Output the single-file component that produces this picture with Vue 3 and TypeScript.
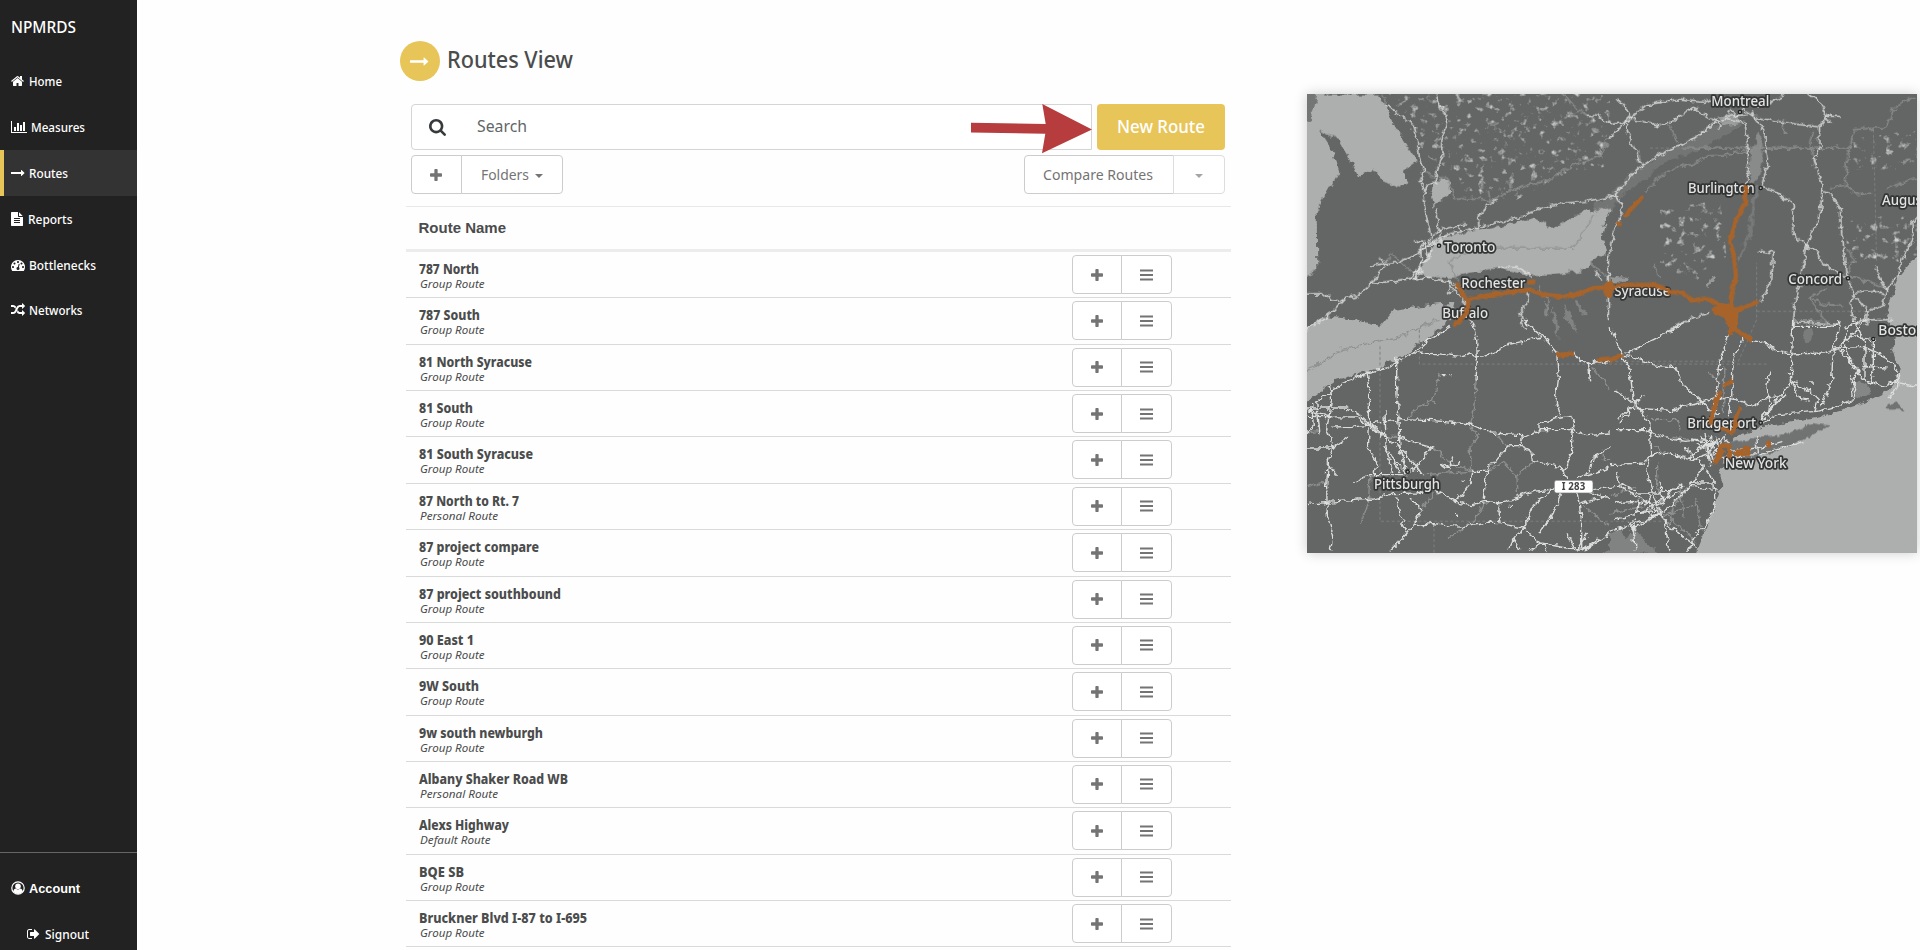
<script setup lang="ts">
interface Icon { box: string; d: string; w: number; h: number }
interface Tile { x: number; y: number; roads: string[]; minor: string[]; routes: string[] }

const icons: Record<string, Icon> = {
  home: { box: '64 0 1664 1792', w: 13, h: 14, d: 'M1472 992v480q0 26-19 45t-45 19h-384v-384h-256v384h-384q-26 0-45-19t-19-45v-480q0-1 .5-3t.5-3l575-474 575 474q1 2 1 6zm223-69l-62 74q-8 9-21 11h-3q-13 0-21-7l-692-577-692 577q-12 8-24 7-13-2-21-11l-62-74q-8-10-7-23.500t11-21.500l719-599q32-26 76-26t76 26l244 204v-195q0-14 9-23t23-9h192q14 0 23 9t9 23v408l219 182q10 8 11 21.500t-7 23.500z' },
  bars: { box: '0 0 2048 1792', w: 16, h: 14, d: 'M640 896v512h-256v-512h256zm384-512v1024h-256v-1024h256zm1024 1152v128h-2048v-1536h128v1408h1920zm-640-896v768h-256v-768h256zm384-384v1152h-256v-1152h256z' },
  arrow: { box: '0 0 1792 1792', w: 14, h: 14, d: 'M1728 893q0 14-10 24l-384 354q-16 14-35 6-19-9-19-29v-224h-1248q-14 0-23-9t-9-23v-192q0-14 9-23t23-9h1248v-224q0-21 19-29t35 5l384 350q10 10 10 23z' },
  file: { box: '128 0 1536 1792', w: 12, h: 14, d: 'M1596 476q14 14 28 36h-472v-472q22 14 36 28zm-476 164h544v1056q0 40-28 68t-68 28h-1344q-40 0-68-28t-28-68v-1600q0-40 28-68t68-28h800v544q0 40 28 68t68 28zm160 736v-64q0-14-9-23t-23-9h-704q-14 0-23 9t-9 23v64q0 14 9 23t23 9h704q14 0 23-9t9-23zm0-256v-64q0-14-9-23t-23-9h-704q-14 0-23 9t-9 23v64q0 14 9 23t23 9h704q14 0 23-9t9-23zm0-256v-64q0-14-9-23t-23-9h-704q-14 0-23 9t-9 23v64q0 14 9 23t23 9h704q14 0 23-9t9-23z' },
  gauge: { box: '0 0 1792 1792', w: 14, h: 14, d: 'M384 1152q0-53-37.500-90.500t-90.500-37.500-90.500 37.500-37.500 90.500 37.500 90.500 90.500 37.500 90.500-37.500 37.500-90.500zm192-448q0-53-37.500-90.500t-90.500-37.500-90.500 37.500-37.500 90.500 37.500 90.500 90.500 37.500 90.500-37.500 37.500-90.500zm428 481l101-382q6-26-7.500-48.500t-38.500-29.500-48 6.500-30 39.500l-101 382q-60 5-107 43.500t-63 98.500q-20 77 20 146t117 89 146-20 89-117q16-60-6-117t-72-91zm660-33q0-53-37.500-90.500t-90.500-37.500-90.500 37.500-37.500 90.500 37.500 90.500 90.500 37.500 90.500-37.500 37.500-90.500zm-640-640q0-53-37.500-90.500t-90.500-37.500-90.500 37.500-37.500 90.500 37.500 90.500 90.500 37.500 90.500-37.500 37.500-90.500zm448 192q0-53-37.500-90.500t-90.500-37.500-90.500 37.500-37.500 90.500 37.500 90.500 90.500 37.500 90.500-37.500 37.500-90.500zm320 448q0 261-141 483-19 29-54 29h-1402q-35 0-54-29-141-221-141-483 0-182 71-348t191-286 286-191 348-71 348 71 286 191 191 286 71 348z' },
  random: { box: '0 0 1792 1792', w: 14, h: 14, d: 'M666 481q-60 92-137 273-22-45-37-72.500t-40.500-63.500-51-56.500-63-35-81.500-14.500h-224q-14 0-23-9t-9-23v-192q0-14 9-23t23-9h224q250 0 410 225zm1126 799q0 14-9 23l-320 320q-9 9-23 9-13 0-22.500-9.500t-9.500-22.500v-192q-32 0-85 .5t-81 1-73-1-71-5-64-10.500-63-18.500-58-28.500-59-40-55-53.500-56-69.500q59-93 136-273 22 45 37 72.500t40.500 63.500 51 56.500 63 35 81.500 14.500h256v-192q0-14 9-23t23-9q12 0 24 10l319 319q9 9 9 23zm0-896q0 14-9 23l-320 320q-9 9-23 9-13 0-22.500-9.500t-9.500-22.500v-192h-256q-48 0-87 15t-69 45-51 61.500-45 77.500q-32 62-78 171-29 66-49.500 111t-54 105-64 100-74 83-90 68.500-106.500 42-128 16.500h-224q-14 0-23-9t-9-23v-192q0-14 9-23t23-9h224q48 0 87-15t69-45 51-61.500 45-77.500q32-62 78-171 29-66 49.500-111t54-105 64-100 74-83 90-68.500 106.500-42 128-16.500h256v-192q0-14 9-23t23-9q12 0 24 10l319 319q9 9 9 23z' },
  signout: { box: '64 0 1664 1792', w: 13, h: 14, d: 'M704 1440q0 4 1 20t.5 26.500-3 23.500-10 19.500-20.500 6.500h-320q-119 0-203.500-84.500t-84.500-203.500v-704q0-119 84.500-203.500t203.500-84.500h320q13 0 22.500 9.500t9.500 22.500q0 4 1 20t.5 26.500-3 23.500-10 19.500-20.500 6.500h-320q-66 0-113 47t-47 113v704q0 66 47 113t113 47h312l11.500 1 11.500 3 8 5.500 7 9 2 13.500zm928-544q0 26-19 45l-544 544q-19 19-45 19t-45-19-19-45v-288h-448q-26 0-45-19t-19-45v-384q0-26 19-45t45-19h448v-288q0-26 19-45t45-19 45 19l544 544q19 19 19 45z' },
}

const nav = [
  { label: 'Home', icon: icons.home, width: 33, gap: 4.5 },
  { label: 'Measures', icon: icons.bars, width: 54, gap: 3.5 },
  { label: 'Routes', icon: icons.arrow, width: 39, gap: 4 },
  { label: 'Reports', icon: icons.file, width: 44.5, gap: 4.5 },
  { label: 'Bottlenecks', icon: icons.gauge, width: 67, gap: 4 },
  { label: 'Networks', icon: icons.random, width: 53.5, gap: 4 },
]
const current = 'Routes'

const plus = 'M1600 736v192q0 40-28 68t-68 28h-416v416q0 40-28 68t-68 28h-192q-40 0-68-28t-28-68v-416h-416q-40 0-68-28t-28-68v-192q0-40 28-68t68-28h416v-416q0-40 28-68t68-28h192q40 0 68 28t28 68v416h416q40 0 68 28t28 68z'
const magnifier = 'M1216 832q0-185-131.500-316.500t-316.500-131.500-316.500 131.500-131.500 316.500 131.500 316.500 316.500 131.500 316.500-131.500 131.500-316.500zm512 832q0 52-38 90t-90 38q-54 0-90-38l-343-342q-179 124-399 124-143 0-273.500-55.500t-225-150-150-225-55.500-273.500 55.500-273.500 150-225 225-150 273.500-55.500 273.500 55.500 225 150 150 225 55.500 273.500q0 220-124 399l343 343q37 37 37 90z'

const routes = [
  { name: '787 North', owner: 'Group', width: 60 },
  { name: '787 South', owner: 'Group', width: 61 },
  { name: '81 North Syracuse', owner: 'Group', width: 113 },
  { name: '81 South', owner: 'Group', width: 54 },
  { name: '81 South Syracuse', owner: 'Group', width: 114 },
  { name: '87 North to Rt. 7', owner: 'Personal', width: 100 },
  { name: '87 project compare', owner: 'Group', width: 120 },
  { name: '87 project southbound', owner: 'Group', width: 142 },
  { name: '90 East 1', owner: 'Group', width: 55 },
  { name: '9W South', owner: 'Group', width: 60 },
  { name: '9w south newburgh', owner: 'Group', width: 124 },
  { name: 'Albany Shaker Road WB', owner: 'Personal', width: 149 },
  { name: 'Alexs Highway', owner: 'Default', width: 90 },
  { name: 'BQE SB', owner: 'Group', width: 45 },
  { name: 'Bruckner Blvd I-87 to I-695', owner: 'Group', width: 168 },
]
const ownerWidth: Record<string, number> = { Group: 64.5, Personal: 78, Default: 70.5 }

const tiles: Tile[] = [
  {
    x: 0, y: 0,
    roads: [
      'M262 48L300 78 342 108 352 150 358 205 374 240 360 275 374 300 368 320 380 385 392 440', 'M408 14L415 45 440 80 438 112 428 130 428 195 410 250 406 275 374 300', 'M405 354L415 410 424 460', 'M538 415L534 380 565 345 590 332', 'M930 320L860 335 790 340 730 352 670 380 600 397 540 413 480 425 430 440 385 465 350 495 300 517 255 522 240 505', 'M255 522L215 527M255 528L212 584 180 615 135 626 120 635 90 628 70 612 20 613', 'M212 584L262 576 330 567 385 565 450 576 470 590 490 610', 'M385 460L410 425 445 415 495 402M345 450L375 462 380 500 350 550 330 565M375 455L362 470 365 540 345 570M400 480L380 510 352 540 350 570M430 460L392 460 352 485', 'M480 430L475 405', 'M135 626L100 665 60 695 20 718', 'M445 570L455 600 440 610M455 590L480 620 500 640 515 690 525 720', 'M590 532L650 533 690 552 690 565M685 600L684 640 660 670 665 700 680 720', 'M925 495L925 690M885 545L905 570M860 76L900 80 930 105',
    ],
    minor: ['M245 14L262 48M374 240L400 262 445 265 465 330 520 322 570 335 640 300 750 270 810 232 910 195 915 150 930 143', 'M255 522L275 492 345 557', 'M445 515L495 492 522 475H822L880 375M445 515L475 580', 'M905 155L920 160 912 175M570 338L565 300', 'M710 590L750 635 740 680', 'M790 14L835 60 860 76M920 560L870 520M345 720L420 690'],
    routes: ['M470 577L485 610 505 638 500 670 462 706', 'M505 628L560 618 610 610 690 600 730 615 790 621 840 612 880 595 930 592', 'M682 578H708', 'M920 580V620'],
  },
  {
    x: 930, y: 0,
    roads: [
      'M25 30L60 75 45 100 60 150 75 180 95 232', 'M0 145L45 100 110 45 200 30 280 38 310 30', 'M60 75L80 92 150 108 180 100 245 52 320 95 345 85 405 98', 'M525 15L480 38 430 50', 'M595 14L635 45 650 80 628 112 630 170 612 210 638 290 630 370 590 470 575 560 555 640 548 720', 'M650 80H690M645 88L665 98', 'M430 82L520 98 628 112', 'M405 98L415 190 415 240 408 290', 'M435 85L465 125 465 160 475 210 455 293 500 305 550 345 548 430 590 470 610 475 640 520 680 555 712 560', 'M15 315L80 240 140 200 240 155 320 95', 'M0 325L15 315 35 345 35 375 10 430 0 500', 'M640 305L655 310 690 350 695 430 708 520 712 560 730 610 770 660 770 710', 'M440 482L490 490 485 570 460 620 450 635', 'M920 385L905 400 910 450 880 500 860 560 830 600 815 650M795 530L800 550 830 600M730 610L800 605 820 615M735 610L720 640 730 690', 'M180 720L230 690 300 670', 'M555 697L640 700 690 710', 'M0 105L50 98M320 95L330 105 325 120M360 65L385 80M400 60L430 80 425 60M345 80L410 75', 'M815 650L770 665M740 700L770 690 850 690',
    ],
    minor: ['M105 310L150 260 210 230 250 225 290 200 345 195 415 180', 'M215 175H720L730 120 790 115 830 110 850 60 890 30 920 22', 'M720 175L708 220 710 290 660 295M710 290L740 315 790 310M830 300L870 280 920 265', 'M178 108L205 160M610 125L600 175 615 205M715 480L730 510 712 560 760 570 820 590', 'M598 625L650 595M598 625L650 645 700 650M598 625L650 700', 'M95 235L85 180M135 525L148 570M520 85L520 130 530 130'],
    routes: ['M100 320L70 350 45 380M18 402H35', 'M407 285L405 345 380 385 360 455 372 500 378 560 365 610 365 660 375 720', 'M0 592L60 585 140 586 180 607 215 608 245 633 290 626 350 655 360 690', 'M305 660H370L400 655 445 635M135 578L140 595M345 650L380 665 375 700'],
  },
  {
    x: 0, y: 690,
    roads: [
      'M515 0L530 60 532 120 528 180', 'M455 20L390 60 340 100 260 145 200 160 130 188 50 245', 'M340 100L410 102 480 110 510 100 530 115 570 105 625 75 690 60 725 52', 'M670 0L690 18 730 50 770 100 775 180 768 240 782 290', 'M925 125L890 130 840 125 820 100M865 130L872 185', 'M290 110L290 210 297 300 300 390 320 460', 'M200 155L208 190 208 310 205 390 230 425 222 465', 'M100 322L150 320 220 312 300 300 400 303 512 313 570 340 670 345M720 312L760 298 815 290', 'M20 265H140L180 290 210 315 290 375 350 440 370 470', 'M20 290L170 292 250 350M50 245L60 345M85 200L95 240 80 330 100 380 85 425 80 500 82 590 98 650 90 695M20 385L100 385 145 355M35 250L40 320 20 340M20 270L95 290M80 425L110 465', 'M20 555L80 548 220 538 280 522 350 520 400 510 470 548 520 555 555 545 600 550 700 515 760 508', 'M255 270L258 380 275 460M300 355L395 382 350 440 320 465 210 465 160 490M270 400L300 460M250 380L310 450', 'M670 345L665 380 620 382 560 455 550 540M665 380L695 395 700 425 780 440 800 475M670 355L720 330 815 330 860 345 930 340M720 312L720 330M805 290L825 300 815 350 815 400 790 470', 'M455 410L450 450 425 430M450 440L480 425', 'M515 455L510 490 470 545M515 455H560M830 475L930 445M870 458L880 410 930 385', 'M850 510L930 540M850 515L930 500M770 500L700 560 670 625M785 515L760 580 720 640M830 510L845 600 845 690M835 555L920 530', 'M340 618L400 612 440 618 500 620 560 610 600 612 670 625 720 670 800 685 860 690M290 530L300 590 325 640 270 695M330 535L365 570 340 620 325 640M595 550L600 610M670 625L640 660 625 695M725 670L740 697M725 670L690 695M640 660L660 690', 'M800 640L830 695M860 640L830 690M890 660L850 695M930 640L850 695', 'M425 165H440M448 168H458M485 483L495 488M470 580V592M628 560H640',
    ],
    minor: ['M20 155L125 90 320 45 400 0', 'M325 300L350 260 400 245 420 160M528 180L525 260 512 312', 'M512 320L535 350 510 380 515 455', 'M560 455L610 430 650 470 655 520M590 345L620 382M700 425L655 465M20 500L80 485M210 470L205 550 185 610M400 520L370 565M550 550L520 610M875 140L930 210M395 382L450 430 515 455M370 465L440 460 515 455', 'M440 660L510 610M850 560L930 620M255 350H300M910 385V420H930M20 340L60 335'],
    routes: ['M485 0L460 18', 'M768 100L790 108 822 100', 'M890 123Q912 115 930 118'],
  },
  {
    x: 930, y: 690,
    roads: [
      'M0 20L30 90 60 150 70 240 85 260 120 310 125 400 110 450 130 530 160 590 180 697', 'M38 105L130 135 200 145 215 190 265 235 300 270 330 280', 'M50 100L150 50 240 0', 'M355 45L325 140 318 230 315 290M400 55L370 110 365 230 355 290', 'M425 62L470 70 500 95 545 103 640 100 680 85 760 80 830 115 870 160 865 190 920 200', 'M548 0L545 103 545 185 500 240 450 310', 'M545 185L600 215 625 240 615 275M545 185L570 240 600 245M545 185L535 155M455 295L530 220', 'M20 300L60 265 180 272 270 250 315 230 380 240 430 260 460 235 530 230M460 310L500 285 620 275 680 260 730 240 740 210 720 170M480 155L470 200 480 240 475 290', 'M20 330L110 330 150 350 220 365 300 360M120 405L170 400 250 420 310 400M0 435L100 430 140 400', 'M250 360L300 380 310 430M260 380L320 370M270 350L330 400M285 340L300 440M230 420L270 385 330 360M220 380L280 440M300 350L310 370 295 400M340 355L310 405M320 345L322 410M340 350L355 370', 'M280 440L240 500 180 560 110 600 50 620 0 635M280 440L315 490 318 560 290 610 260 640 230 695M240 500L320 510M240 490L315 490', 'M0 500L40 495 80 520 150 520 220 500M10 600L60 590 130 560 160 545 200 500M15 550L70 545 120 555 210 520M130 560L180 620 260 680M70 620L75 695M80 600L60 610 75 650M20 460L30 500 130 560M85 540L80 580 150 570M150 485L155 540M115 520L130 600M70 630L160 575M180 520L215 490 215 510', 'M310 408L340 410 440 405 500 390 580 365M360 395L440 385 520 365M440 350L445 400', 'M690 0L685 40 670 85 665 180 635 260M550 20H680M710 20L705 70 720 120 760 180 820 200 870 180M790 60L790 150 780 190M730 0L765 70 765 180M690 90L740 150 725 230M750 0L710 30M770 0L750 20 690 80M760 140L830 145M720 50L790 60M725 145L750 150 720 190', 'M860 160L860 200 840 235',
      'M15 210L70 250M70 220L80 260M100 230L75 255 30 310M600 190H615M325 150H340',
    ],
    minor: ['M345 140L340 280M330 190L300 160M125 300L205 300 210 330M130 380L170 400M150 520L140 500 140 430M240 500L190 560 180 620M210 500L220 600M260 550L160 590M260 540L270 620M240 360L170 350M0 530L80 500M155 570L260 670M0 580L100 560'],
    routes: ['M0 122L38 105', 'M372 0L360 45M370 25L425 62', 'M340 200L370 183M332 213L320 240 300 315M393 262L378 290 373 340M333 325L370 340', 'M315 430L335 378H358L357 415M370 402L415 385 415 403 380 405M472 365L478 382M318 425L340 390'],
  },
]

const labels = [
  { text: 'Toronto', x: 433, y: 487, w: 153 },
  { text: 'Rochester', x: 484, y: 595, w: 192 },
  { text: 'Buffalo', x: 427, y: 685, w: 137 },
  { text: 'Montreal', x: 1234, y: 50, w: 174 },
  { text: 'Burlington', x: 1164, y: 310, w: 200 },
  { text: 'Augusta', x: 1746, y: 347, w: 158 },
  { text: 'Concord', x: 1465, y: 584, w: 161 },
  { text: 'Syracuse', x: 943, y: 619, w: 168 },
  { text: 'Boston', x: 1735, y: 735, w: 140 },
  { text: 'Bridgeport', x: 1162, y: 1015, w: 206 },
  { text: 'New York', x: 1274, y: 1135, w: 186 },
  { text: 'Pittsburgh', x: 222, y: 1199, w: 198 },
]
const towns = [[417, 468], [1320, 67], [1382, 295], [1644, 566], [1720, 748], [1382, 999], [323, 1146]]
</script>

<template>
  <div class="page">
    <aside class="sidebar">
      <div class="brand"><svg class="fit" width="66" height="22"><text x="0" y="17" textLength="65" lengthAdjust="spacingAndGlyphs">NPMRDS</text></svg></div>
      <nav>
        <a v-for="item in nav" :key="item.label" class="nav-item" :class="{ active: item.label === current }">
          <svg :viewBox="item.icon.box" :width="item.icon.w" :height="item.icon.h" class="glyph"><path :d="item.icon.d" /></svg>
          <svg class="fit" :style="{ marginLeft: item.gap + 'px' }" :width="item.width + 2" height="20"><text x="0" y="15" :textLength="item.width" lengthAdjust="spacingAndGlyphs">{{ item.label }}</text></svg>
        </a>
      </nav>
      <div class="account">
        <a class="nav-item strong">
          <svg class="glyph" viewBox="0 0 14 14" width="14" height="14"><circle cx="7" cy="7" r="6.200" fill="none" stroke="#fff" stroke-width="1.200" /><circle cx="7" cy="5.300" r="2.800" /><path d="M2.200 10.800Q2.800 7.600 4.900 7.600Q7 9.400 9.100 7.600Q11.200 7.600 11.800 10.800Q7 15.200 2.200 10.800Z" /></svg>
          <svg class="fit" width="53" height="20"><text x="0" y="15" textLength="51" lengthAdjust="spacingAndGlyphs">Account</text></svg>
        </a>
        <a class="nav-item sub">
          <svg class="glyph" :viewBox="icons.signout.box" width="13" height="14"><path :d="icons.signout.d" /></svg>
          <svg class="fit" width="46" height="20"><text x="0" y="14.500" textLength="44" lengthAdjust="spacingAndGlyphs">Signout</text></svg>
        </a>
      </div>
    </aside>

    <main class="content">
      <header class="title">
        <span class="disc"><svg viewBox="0 0 1792 1792" width="19" height="19"><path :d="icons.arrow.d" /></svg></span>
        <svg class="fit heading" width="132" height="34"><text x="0" y="26" textLength="126" lengthAdjust="spacingAndGlyphs">Routes View</text></svg>
      </header>

      <div class="search-row">
        <div class="search">
          <svg class="lens" viewBox="64 128 1664 1664" width="17" height="17"><path :d="magnifier" /></svg>
          <svg class="fit" width="56" height="26"><text x="0" y="18" textLength="50" lengthAdjust="spacingAndGlyphs">Search</text></svg>
        </div>
        <button class="new-route"><svg class="fit" width="90" height="28"><text x="1" y="20" textLength="88" lengthAdjust="spacingAndGlyphs">New Route</text></svg></button>
        <svg class="pointer" width="122" height="50" viewBox="0 0 122 50"><path d="M0 18.700L74.700 20 71.300 0 121 25.500 71 49.300 74.300 29.800 0 28.500Z" /></svg>
      </div>

      <div class="tools">
        <div class="group">
          <button class="add"><svg viewBox="192 128 1408 1408" width="12" height="12"><path :d="plus" /></svg></button>
          <button class="folders"><svg class="fit" width="49" height="24"><text x="0" y="16.500" textLength="48" lengthAdjust="spacingAndGlyphs">Folders</text></svg><i class="caret" /></button>
        </div>
        <div class="group">
          <button class="compare"><svg class="fit" width="111" height="24"><text x="0" y="16.500" textLength="110" lengthAdjust="spacingAndGlyphs">Compare Routes</text></svg></button>
          <button class="more"><i class="caret" /></button>
        </div>
      </div>

      <section class="table">
        <div class="thead">Route Name</div>
        <div v-for="route in routes" :key="route.name" class="row">
          <div class="names">
            <svg class="fit name" :width="route.width + 2" height="18"><text x="0" y="14" :textLength="route.width" lengthAdjust="spacingAndGlyphs">{{ route.name }}</text></svg>
            <svg class="fit owner" :width="ownerWidth[route.owner] + 3" height="15"><text x="1" y="11" :textLength="ownerWidth[route.owner]" lengthAdjust="spacingAndGlyphs">{{ route.owner }} Route</text></svg>
          </div>
          <div class="group actions">
            <button><svg viewBox="192 128 1408 1408" width="12" height="12"><path :d="plus" /></svg></button>
            <button><svg viewBox="0 0 13 12" width="13" height="12"><path d="M0 .5h13v2H0zM0 5h13v2H0zM0 9.500h13v2H0z" /></svg></button>
          </div>
        </div>
      </section>
    </main>

    <div class="map">
      <svg width="610" height="459" viewBox="21 13 1830 1377">
        <defs>
          <filter id="wobble" x="-5%" y="-5%" width="110%" height="110%"><feTurbulence type="fractalNoise" baseFrequency="0.05" numOctaves="3" seed="4" /><feDisplacementMap in="SourceGraphic" scale="22" xChannelSelector="R" yChannelSelector="G" /></filter>
          <filter id="rough" x="-5%" y="-5%" width="110%" height="110%"><feTurbulence type="fractalNoise" baseFrequency="0.06" numOctaves="2" seed="7" /><feDisplacementMap in="SourceGraphic" scale="12" xChannelSelector="R" yChannelSelector="G" /></filter>
          <filter id="shore" x="-5%" y="-5%" width="110%" height="110%"><feTurbulence type="fractalNoise" baseFrequency="0.04" numOctaves="3" seed="8" /><feDisplacementMap in="SourceGraphic" scale="26" xChannelSelector="R" yChannelSelector="G" /><feGaussianBlur stdDeviation="2" /></filter>
          <filter id="speckle" x="0" y="0" width="100%" height="100%"><feTurbulence type="fractalNoise" baseFrequency="0.045" numOctaves="3" seed="11" /><feColorMatrix values="0 0 0 0 0.62  0 0 0 0 0.63  0 0 0 0 0.63  3.500 0 0 0 -2.050" /><feComposite in2="SourceGraphic" operator="in" /><feGaussianBlur stdDeviation="1.500" /></filter>
        </defs>
        <rect x="0" y="0" width="1870" height="1400" fill="#636665" />
        <g class="speckles">
          <path d="M260 0H930V230L800 250 650 330 500 320 470 250 380 200 330 120ZM1080 360L1260 330 1280 500 1180 580 1080 520ZM1640 150L1850 120V240L1640 240ZM1640 380H1850V520H1640Z" />
        </g>
        <g class="water">
          <path d="M0 0H35L75 14H235L275 90 320 165 350 215 315 240 320 280 295 295 250 275 215 235 175 265 145 200 115 150 60 122 100 185 118 245 80 310 50 365 52 540 0 565Z" />
          <path d="M55 0L40 65 20 100H0V0Z" fill="#737675" />
          <path d="M400 280Q430 255 450 280L450 310 400 350 392 315Z" />
          <path d="M385 490L420 445 500 425 620 405 700 385 760 415 850 360 880 365 930 350 905 440 915 490 840 545 750 557 690 560 600 535 530 545 450 565 390 562 355 550Z" />
          <path d="M880 345L930 310 1010 235 1100 185 1245 105 1320 85 1335 100 1200 180 1100 215 980 310 930 365 890 375Z" opacity=".22" />
          <path d="M0 728L80 680 170 690 240 710 280 660 400 645 460 640 450 690 390 740 320 790 240 835 110 870 20 935 0 940Z" />
          <path d="M1870 490L1830 520 1790 570 1775 620 1760 680 1785 735 1775 790 1800 850 1770 900 1690 940 1560 980 1390 1010 1300 1045 1262 1150 1260 1200 1230 1290 1180 1410H1870V490Z" />
          <path d="M930 1330L960 1320 1010 1395H930ZM900 1395L1010 1325 1080 1395Z" opacity=".4" />
          <path d="M1370 130Q1350 200 1345 245L1352 280 1380 265 1392 180 1390 150Z" opacity=".5" />
          <path d="M1365 285L1350 400 1340 450 1310 510 1315 520 1345 460 1355 430 1378 290Z" opacity=".28" />
          <path d="M930 560L985 565 990 580 930 577ZM1235 560L1220 590 1228 595 1245 565ZM1250 85L1310 70 1320 100 1270 110Z" opacity=".7" />
          <path d="M755 645L765 720 775 750 772 690ZM790 640L800 690 835 735 815 680ZM735 630L745 650 740 685 732 680ZM825 635L850 675 860 670 835 635Z" opacity=".4" />
          <ellipse cx="1525" cy="735" rx="12" ry="26" opacity=".3" />
          <ellipse cx="1680" cy="900" rx="30" ry="24" opacity=".45" />
        </g>
        <g class="island"><path d="M1755 960L1785 935 1815 960ZM1285 1060L1390 1042 1450 1038 1535 1000 1590 1008 1500 1055 1375 1100 1285 1115Z" /></g>
        <path class="border" d="M1050 175H1645M930 815H1315L1370 690 1370 520M240 770V1295H1100M358 720V823H1400M1720 120L1725 310 1730 520M1370 665H1700M402 1300V1390" />
        <g filter="url(#wobble)">
          <g v-for="(tile, i) in tiles" :key="i" :transform="`translate(${tile.x} ${tile.y})`">
            <path v-for="(d, n) in tile.minor" :key="'m' + n" class="minor" :d="d" />
            <path v-for="(d, n) in tile.roads" :key="'r' + n" class="road" :d="d" />
          </g>
        </g>
        <g v-for="(t, i) in towns" :key="'t' + i"><circle :cx="t[0]" :cy="t[1]" r="5" fill="#aaa" stroke="#222" stroke-width="4" /></g>
        <text v-for="l in labels" :key="l.text" class="city" :x="l.x" :y="l.y" :textLength="l.w" lengthAdjust="spacingAndGlyphs">{{ l.text }}</text>
        <rect x="763" y="1172" width="116" height="38" rx="7" fill="#fff" stroke="#777" stroke-width="2" />
        <text class="shield" x="785" y="1201" textLength="71">I 283</text>
        <g filter="url(#rough)">
          <g v-for="(tile, i) in tiles" :key="'o' + i" :transform="`translate(${tile.x} ${tile.y})`">
            <path v-for="(d, n) in tile.routes" :key="n" class="route" :d="d" />
          </g>
          <path class="hub" d="M1240 650L1285 640 1300 655 1330 655 1315 675 1310 715 1285 715 1275 685 1240 672ZM915 575L935 570 945 590 932 625 920 620 915 600Z" />
        </g>
      </svg>
    </div>
  </div>
</template>

<style>
html, body { margin: 0; overflow: hidden; background: #fff; }
</style>

<style scoped>
.page { display: flex; width: 1920px; height: 950px; overflow: hidden; background: #fefefe; font-family: "Noto Sans", "Open Sans", sans-serif; color: #4b4c4c; }
svg { display: block; flex: none; }
.fit { overflow: visible; }
.fit text { fill: currentColor; }
.sidebar { display: flex; flex-direction: column; width: 137px; background: #222; color: #fff; flex: none; }
.brand { height: 58px; box-sizing: border-box; padding: 16px 0 0 11px; font-size: 16px; font-weight: 500; }
.nav-item { display: flex; align-items: center; box-sizing: border-box; height: 45.900px; padding-left: 11px; font-size: 13px; font-weight: 500; border: 0 solid #e8c559; }
.nav-item.active { background: #333; border-left-width: 4px; padding-left: 7px; }
.glyph { fill: #fff; }
.account { margin-top: auto; height: 98px; box-sizing: border-box; border-top: 1px solid #666; padding-top: 12px; }
.strong { font: bold 13.500px "Liberation Sans", Arial, sans-serif; gap: 4px; }
.nav-item.sub { padding-left: 27px; gap: 5px; }
.content { width: 825px; margin-left: 268.500px; flex: none; }
.title { display: flex; align-items: center; height: 40px; margin: 41px 0 0 -6px; }
.disc { display: flex; align-items: center; justify-content: center; width: 40px; height: 40px; border-radius: 50%; background: #e8c559; fill: #fff; }
.heading { margin: -4px 0 0 7.500px; font-size: 23px; font-weight: 500; }
.search-row { position: relative; display: flex; gap: 4.500px; margin: 23px 6px 0 5.500px; }
.search { display: flex; align-items: center; box-sizing: border-box; width: 681px; height: 46px; border: 1px solid #d4d5d5; border-radius: 4px 0 0 4px; padding-left: 17px; font-size: 16.500px; color: #616668; background: #fff; }
.lens { fill: #373a3c; margin-right: 31px; }
button { display: flex; align-items: center; justify-content: center; box-sizing: border-box; padding: 0; margin: 0; background: #fff; border: 1px solid #ccc; font-family: inherit; color: #747474; fill: #747474; }
.new-route { flex: 1; height: 46px; border: 0; border-radius: 4px; background: #e8c559; color: #fff; font-size: 18px; font-weight: 500; }
.pointer { position: absolute; left: 560px; top: 0; fill: #b63c3e; }
.tools { display: flex; justify-content: space-between; margin: 5px 6px 0 5.500px; }
.group { display: flex; }
.group button { height: 39px; font-size: 15px; }
.group button:first-child { border-radius: 4px 0 0 4px; }
.group button:last-child { border-radius: 0 4px 4px 0; margin-left: -1px; }
.group .add { width: 50.500px; }
.folders { width: 102px; gap: 5px; }
.caret { width: 0; height: 0; border: 4.500px solid transparent; border-top-color: currentColor; border-bottom: 0; margin-top: 2px; }
.compare { width: 150px; }
.group .more { width: 52px; border-color: #ddd; color: #a5a5a5; }
.table { margin-top: 11.500px; border-top: 1px solid #e7e8e8; }
.thead { height: 42.500px; padding-left: 13px; font: bold 15px/41px "Liberation Sans", Arial, sans-serif; border-bottom: 3px solid #ebecec; box-sizing: content-box; }
.row { display: flex; justify-content: space-between; box-sizing: border-box; height: 46.370px; border-bottom: 1px solid #d9dbdb; padding: 3px 59px 0 13px; }
.names { padding-top: 5px; }
.name { font-size: 14px; font-weight: 800; }
.owner { font-size: 11.500px; font-style: italic; margin-top: -1px; }
.actions button { width: 50.500px; }
.map { width: 610px; height: 459px; margin: 94px 0 0 76.500px; flex: none; box-shadow: 0 0 12px rgba(0, 0, 0, .2); }
.water { fill: #adafae; filter: url(#shore); }
.island { fill: #707372; filter: url(#shore); }
.speckles { filter: url(#speckle); }
.road { fill: none; stroke: #dcdddd; stroke-width: 4.200; stroke-linejoin: round; }
.minor { fill: none; stroke: #8e9190; stroke-width: 4; }
.border { fill: none; stroke: #7d807f; stroke-width: 3; stroke-dasharray: 9 7; }
.route { fill: none; stroke: #a8642a; stroke-width: 13; stroke-linejoin: round; }
.hub { fill: #a8642a; }
.city { font: 500 43px "Noto Sans", sans-serif; fill: #e4e4e4; stroke: #343635; stroke-width: 11; stroke-linejoin: round; paint-order: stroke; }
.shield { font: bold 29px "Noto Sans", sans-serif; fill: #444; }
</style>
